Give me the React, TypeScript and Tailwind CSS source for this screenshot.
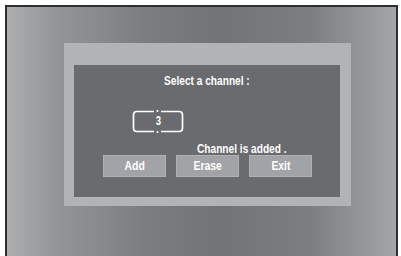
import React from "react";

const font = { fontFamily: '"Liberation Sans", Arial, sans-serif' };

function Btn({ label }: { label: string }) {
  return (
    <div className="w-[63px] h-[22px] bg-[#a2a3a6] border border-[#b0b1b4] flex items-center justify-center">
      <span className="inline-block text-[13px] leading-[14px] font-bold text-white scale-x-[0.8] origin-center">
        {label}
      </span>
    </div>
  );
}

export default function App() {
  return (
    <div className="w-[401px] h-[256px] bg-white pl-[5px] pr-[3px] pt-[5px] overflow-hidden" style={font}>
      <div className="h-[260px] border-2 border-b-0 border-[#2f2f30] bg-[linear-gradient(to_right,#adaeb0_0%,#959699_12%,#7c7d80_35%,#727376_55%,#7d7e81_78%,#a4a5a7_100%)] pt-[36px] pl-[57px]">
        <div className="w-[287px] h-[163px] bg-[#b1b3b6] pt-[22px] pl-[10px]">
          <div className="w-[266px] h-[132px] bg-[#6a6b6e] flex flex-col pt-[8px]">
            <div className="h-[15px] flex justify-center">
              <span className="inline-block text-[13px] leading-[15px] font-bold text-white scale-x-[0.78] origin-center whitespace-nowrap">
                Select a channel :
              </span>
            </div>
            <div className="relative ml-[58px] mt-[22px] w-[52px] h-[23px] flex items-center justify-center">
              <svg className="absolute inset-0" width="52" height="23" viewBox="0 0 52 23" fill="none">
                <path d="M22 1.5 H5 Q1.5 1.5 1.5 5 V18 Q1.5 21.5 5 21.5 H22" stroke="white" strokeWidth="1.7" />
                <path d="M29 1.5 H47 Q50.5 1.5 50.5 5 V18 Q50.5 21.5 47 21.5 H29" stroke="white" strokeWidth="1.7" />
                <circle cx="25.5" cy="0.9" r="1" fill="white" />
                <circle cx="25.5" cy="22.1" r="1" fill="white" />
              </svg>
              <span className="relative inline-block text-[12px] leading-[13px] font-bold text-white scale-x-[0.8]">3</span>
            </div>
            <div className="ml-[123px] mt-[3px] h-[15px]">
              <span className="inline-block text-[13px] leading-[15px] font-bold text-white scale-x-[0.78] origin-left whitespace-nowrap">
                Channel is added .
              </span>
            </div>
            <div className="ml-[29px] mt-[4px] flex gap-[10px]">
              <Btn label="Add" />
              <Btn label="Erase" />
              <Btn label="Exit" />
            </div>
          </div>
        </div>
      </div>
    </div>
  );
}
